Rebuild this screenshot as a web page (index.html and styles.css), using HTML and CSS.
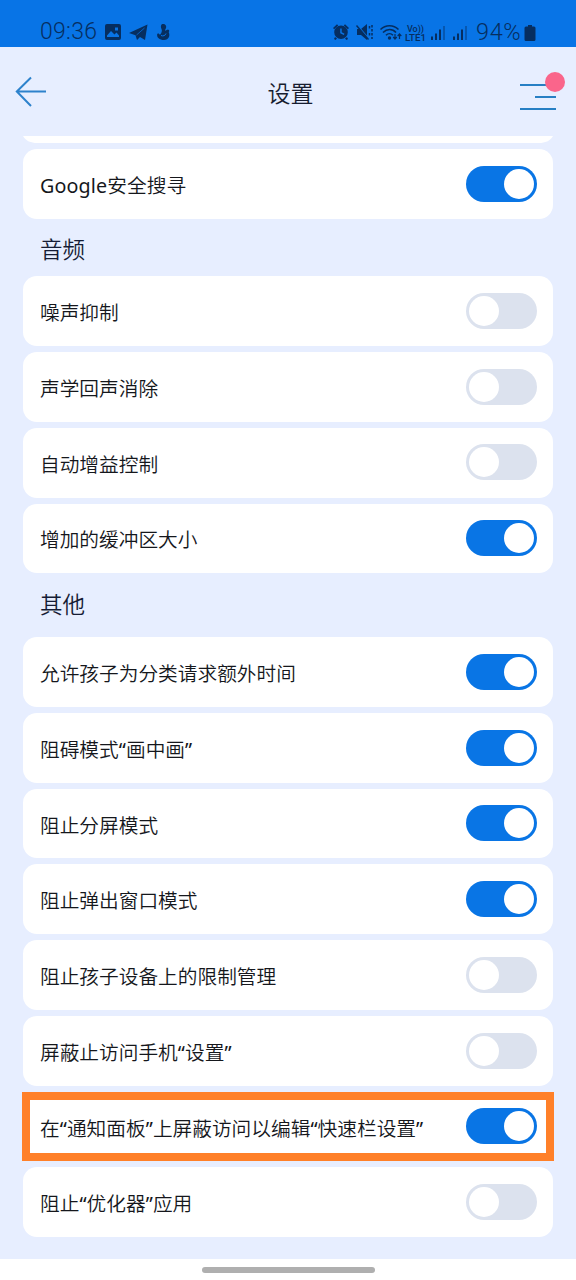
FILE: index.html
```html
<!DOCTYPE html>
<html lang="zh-CN">
<head>
<meta charset="utf-8">
<title>设置</title>
<link rel="stylesheet" href="styles.css">
</head>
<body>
<div class="screen">
  <div class="status">
    <span class="clock">09:36</span>
    <svg class="status-left" width="72" height="20" viewBox="0 0 72 20">
      <path fill="currentColor" fill-rule="evenodd" d="M3 2h12a2 2 0 0 1 2 2v12a2 2 0 0 1-2 2H3a2 2 0 0 1-2-2V4a2 2 0 0 1 2-2zM3 13.500l4-4.500 3.500 3.500 2-2 2.500 3V15H3zM11 5.500h3v3h-3z"/>
      <path fill="currentColor" d="M25 11L43.500 2.500 41 18 36 15 33 18 31.500 13.300z"/>
      <path d="M40.500 6l-8 7" stroke="#0874e6" stroke-width=".7" fill="none"/>
      <path fill="currentColor" d="M57.500 2.500c2.500-1.500 5.500.5 4.500 3.500-.3 1.200-1.200 2-1 2.800l3-1.300c1.300.3 1.700 1.800.6 2.600 1.800 3.400.4 7.900-4.600 7.900-4.500 0-7.500-2.500-6.800-6l1-.8 1.800 1.500c1.500-1.500 2.500-3.500 1.500-5.700-.8-1.700-.8-3.500 0-4.500z"/>
      <path d="M57 13.500c2 1 4.500 0 5-2" stroke="#0874e6" stroke-width="1" fill="none"/>
    </svg>
    <span class="spacer"></span>
    <svg class="status-right" width="138" height="22" viewBox="0 0 138 22">
      <g fill="currentColor">
        <path fill-rule="evenodd" d="M9 4.500a6.800 6.800 0 1 1 0 13.600 6.800 6.800 0 0 1 0-13.600zM8.200 7.500v4.700l3.600 1.800.7-1.300-2.800-1.400V7.500z"/>
        <path d="M1 7l4-3.700 1.200 1.200-4 3.700zM17 7l-4-3.700-1.200 1.200 4 3.700zM3 16l2 1.500L3.500 19 2 18zM15 16l-2 1.500 1.500 1.500 1.500-1z"/>
        <path d="M25 8h4l6-5v16l-6-5h-4z"/>
      </g>
      <path d="M25.500 4.500l12 14" stroke="#0874e6" stroke-width="1.200"/>
      <g fill="none" stroke="currentColor" stroke-width="1.600">
        <path d="M24.500 4.500l12 14" stroke-width="1.400"/>
        <path d="M37.500 5v4M40 4v14M37.500 12v4" stroke-dasharray="2.500 1.500" stroke-width="1.500"/>
        <path d="M48.500 8.500c5-5 13-5 18 0M51 11.500c4-4 9.500-4 13 0M54 14.200c2-2 5-2 7 0" stroke-width="1.600"/>
        <path d="M63 13v5M61.200 16l1.800 2 1.800-2M67.500 18v-5M65.700 15l1.800-2 1.800 2" stroke-width="1.200"/>
      </g>
      <circle cx="57.500" cy="17" r="1.700" fill="currentColor"/>
      <g fill="currentColor">
        <text class="volte" x="75" y="11" textLength="17" lengthAdjust="spacingAndGlyphs">Vo))</text>
        <text class="volte" x="73" y="20" textLength="21" lengthAdjust="spacingAndGlyphs">LTE1</text>
        <path d="M99 15.500h2V19h-2zM103 12.500h2V19h-2zM107 8.500h2V19h-2zM121 15.500h2V19h-2zM125 12.500h2V19h-2zM129 8.500h2V19h-2z"/>
        <path opacity=".4" d="M111 5h2v14h-2zM133 5h2v14h-2z"/>
      </g>
    </svg>
    <span class="percent">94%</span>
    <svg class="battery" width="12" height="18" viewBox="0 0 12 18"><path fill="currentColor" d="M4 1h4v1.500h2A1.500 1.500 0 0 1 11.500 4v11.500A1.500 1.500 0 0 1 10 17H2A1.500 1.500 0 0 1 .5 15.500V4A1.500 1.500 0 0 1 2 2.500h2z"/></svg>
  </div>

  <header class="appbar">
    <svg class="back" width="32" height="32" viewBox="0 0 32 32"><path d="M31 15.500H2M16 1.500L1.800 15.500 16 30"/></svg>
    <h1 class="title">设置</h1>
    <svg class="menu" width="48" height="42" viewBox="0 0 48 42">
      <path d="M3 14h36M18 26h21M3 38h36"/>
      <circle cx="38" cy="11" r="10"/>
    </svg>
  </header>

  <main class="list">
    <div class="peek"></div>
    <div class="row"><span><b>Google</b>安全搜寻</span><i class="switch on"></i></div>
    <h2 class="section audio">音频</h2>
    <div class="group">
      <div class="row"><span>噪声抑制</span><i class="switch"></i></div>
      <div class="row"><span>声学回声消除</span><i class="switch"></i></div>
      <div class="row"><span>自动增益控制</span><i class="switch"></i></div>
      <div class="row"><span>增加的缓冲区大小</span><i class="switch on"></i></div>
    </div>
    <h2 class="section other">其他</h2>
    <div class="group">
      <div class="row"><span>允许孩子为分类请求额外时间</span><i class="switch on"></i></div>
      <div class="row"><span>阻碍模式<b>“</b>画中画<b>”</b></span><i class="switch on"></i></div>
      <div class="row"><span>阻止分屏模式</span><i class="switch on"></i></div>
      <div class="row"><span>阻止弹出窗口模式</span><i class="switch on"></i></div>
      <div class="row"><span>阻止孩子设备上的限制管理</span><i class="switch"></i></div>
      <div class="row"><span>屏蔽止访问手机<b>“</b>设置<b>”</b></span><i class="switch"></i></div>
      <div class="row marked"><span>在<b>“</b>通知面板<b>”</b>上屏蔽访问以编辑<b>“</b>快速栏设置<b>”</b></span><i class="switch on"></i></div>
      <div class="row"><span>阻止<b>“</b>优化器<b>”</b>应用</span><i class="switch"></i></div>
    </div>
  </main>
  <footer class="navbar"><div class="handle"></div></footer>
</div>
</body>
</html>
```
FILE: styles.css
```css
* { box-sizing: border-box; }
body { margin: 0; background: #e7eeff; font-family: "Open Sans", "Noto Sans CJK SC", sans-serif; color: #15171c; }
.screen { width: 576px; height: 1280px; display: flex; flex-direction: column; overflow: hidden; }
.status { height: 47px; flex: none; background: #0874e6; color: #062e60; display: flex; align-items: flex-start; padding: 20px 40px 0 40px; font: 300 23px/24px Roboto, sans-serif; }
.clock { width: 64px; letter-spacing: .3px; }
.status-left { margin-top: 2px; }
.spacer { flex: 1; }
.status-right { margin-top: 1px; margin-right: 6px; }
.percent { width: 48px; font-size: 23.500px; letter-spacing: .6px; }
.battery { margin-top: 4px; }
.volte { font: 500 9.500px Roboto, sans-serif; }
.appbar { height: 89px; flex: none; display: flex; justify-content: space-between; align-items: flex-start; padding: 24px 11px 0 15px; }
.back { margin: 5px 16px 0 0; fill: none; stroke: #2d82cc; stroke-width: 2; }
.title { margin: 5px 0 0 1px; font-size: 23px; line-height: 34px; font-weight: 350; color: #171d30; }
.menu path { fill: none; stroke: #277fc4; stroke-width: 2; }
.menu circle { fill: #fa658b; }
.list { flex: 1; padding: 0 23px; }
.peek { height: 7px; margin-bottom: 6px; background: #fff; clip-path: path("M0 0H530V0C527 5 522 7 516 7H14C8 7 3 5 0 0Z"); }
.group { display: flex; flex-direction: column; gap: 6px; }
.row { height: 69.750px; background: #fff; border-radius: 14px; display: flex; align-items: center; justify-content: space-between; padding: 0 16px 0 17px; font-size: 19.700px; line-height: 30px; font-weight: 350; white-space: nowrap; }
.row span { padding-top: 4px; }
.row b { font-family: "Noto Sans", sans-serif; font-weight: 400; line-height: 1; letter-spacing: .15px; }
.switch { width: 71px; height: 36px; margin-bottom: .3px; border-radius: 18px; background: #dce2ee; display: flex; align-items: center; padding: 0 3px; }
.switch::before { content: ""; width: 30px; height: 30px; border-radius: 50%; background: #fff; }
.switch.on { background: #0975e5; justify-content: flex-end; }
.section { margin: 0; padding-left: 17px; font-size: 22.500px; font-weight: 350; line-height: 34px; color: #151c35; }
.audio { height: 57.500px; padding-top: 14px; }
.other { height: 63.900px; padding-top: 15px; }
.marked { border: 8px solid #ff8029; border-radius: 0; margin: 0 -1px; padding: 0 9px 0 10px; }
.navbar { height: 21px; flex: none; background: #fff; display: flex; justify-content: center; padding-top: 8px; }
.handle { width: 173px; height: 6px; border-radius: 3px; background: #afafaf; }
```
